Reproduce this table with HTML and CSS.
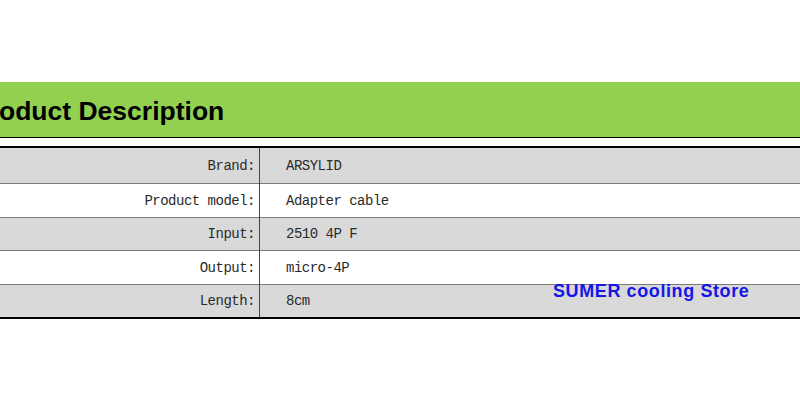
FILE: index.html
```html
<!DOCTYPE html>
<html>
<head>
<meta charset="utf-8">
<link rel="stylesheet" href="styles.css">
</head>
<body>
<div class="page">
  <div class="title-bar"><h2 class="title">Product Description</h2></div>
  <div class="spec-wrap">
    <table class="specs">
      <tr class="alt first"><td class="label">Brand:</td><td class="value">ARSYLID</td></tr>
      <tr><td class="label">Product model:</td><td class="value">Adapter cable</td></tr>
      <tr class="alt short"><td class="label">Input:</td><td class="value">2510 4P F</td></tr>
      <tr><td class="label">Output:</td><td class="value">micro-4P</td></tr>
      <tr class="alt short"><td class="label">Length:</td><td class="value">8cm</td></tr>
    </table>
    <div class="watermark">SUMER cooling Store</div>
  </div>
</div>
</body>
</html>
```
FILE: styles.css
```css
html, body {
  margin: 0;
  padding: 0;
  background: #fff;
  overflow: hidden;
}
.page {
  width: 900px;
  margin-left: -60px;
  padding-top: 82px;
}
.title-bar {
  background: #92d050;
  height: 55px;
  border-bottom: 1px solid #000;
  display: flex;
  align-items: center;
  padding-left: 31px;
  padding-top: 3px;
  box-sizing: content-box;
  height: 52px;
}
.title {
  margin: 0;
  font-family: "Liberation Sans", Arial, sans-serif;
  font-weight: bold;
  font-size: 26.5px;
  color: #000;
  line-height: 1;
}
.spec-wrap {
  position: relative;
  margin-top: 8px;
}
.specs {
  width: 100%;
  border-collapse: collapse;
  border-top: 2px solid #000;
  border-bottom: 2px solid #000;
  font-family: "Liberation Mono", "Courier New", monospace;
  font-size: 14px;
  letter-spacing: -0.5px;
  color: #2a2a2a;
}
.specs tr { background: #fff; }
.specs tr.alt { background: #d9d9d9; }
.specs td {
  height: 33px;
  padding: 0;
  border-top: 1px solid #7a7a7a;
  vertical-align: middle;
}
.specs tr.first td { border-top: none; height: 35px; }
.specs tr.short td { height: 32px; }
.label {
  width: 315px;
  text-align: right;
  padding-right: 4px !important;
  border-right: 1px solid #444;
}
.value {
  padding-left: 26px !important;
}
.watermark {
  position: absolute;
  left: 613px;
  top: 135px;
  font-family: "Liberation Sans", Arial, sans-serif;
  font-weight: bold;
  font-size: 18px;
  color: #1616e6;
  letter-spacing: 0.6px;
}
```
